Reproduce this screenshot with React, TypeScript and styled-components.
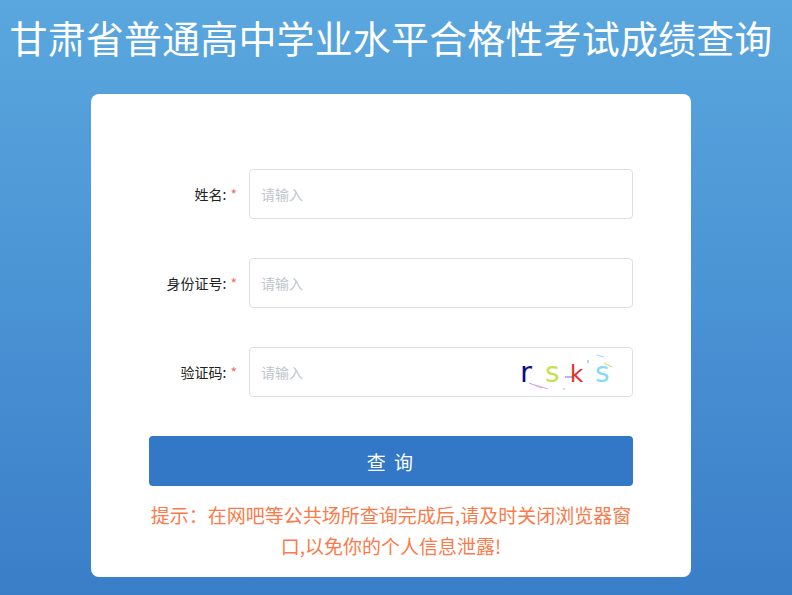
import React from "react";
import styled, { createGlobalStyle } from "styled-components";

const Global = createGlobalStyle`
  html, body { margin: 0; padding: 0; height: 100%; }
  body {
    font-family: "Noto Sans CJK SC", "Noto Sans", sans-serif;
    background: linear-gradient(180deg, #5aa7de 0%, #4a93d4 50%, #3a7ec8 100%);
    min-height: 595px;
    overflow: hidden;
  }
  #root { min-height: 595px; }
`;

const Page = styled.div`
  padding: 14px 10px 0 0;
  display: flex;
  flex-direction: column;
  align-items: center;
`;

const Title = styled.h1`
  margin: 0;
  font-size: 38px;
  line-height: 46px;
  font-weight: 400;
  color: #ffffff;
  white-space: nowrap;
  letter-spacing: 0.15px;
`;

const Card = styled.div`
  margin-top: 34px;
  width: 600px;
  box-sizing: border-box;
  background: #ffffff;
  border-radius: 8px;
  padding: 75px 58px 16px;
  display: flex;
  flex-direction: column;
  gap: 39px;
`;

const Row = styled.div`
  display: flex;
  align-items: center;
  height: 50px;
`;

const Label = styled.label`
  width: 100px;
  box-sizing: border-box;
  padding-right: 12px;
  text-align: right;
  font-size: 14px;
  color: #222;
  white-space: nowrap;
`;

const Star = styled.span`
  color: #f56c6c;
  margin-left: 4px;
`;

const Field = styled.div`
  position: relative;
  flex: 1;
  height: 50px;
`;

const Input = styled.input`
  width: 100%;
  height: 100%;
  box-sizing: border-box;
  border: 1px solid #dcdfe6;
  border-radius: 4px;
  padding: 0 11px;
  font-family: "Noto Sans CJK SC", "Noto Sans", sans-serif;
  font-size: 14px;
  color: #606266;
  outline: none;
  &::placeholder { color: #c0c4cc; }
`;

const Captcha = styled.svg`
  position: absolute;
  right: 8px;
  top: 2px;
`;

const Bottom = styled.div`
  display: flex;
  flex-direction: column;
`;

const Button = styled.button`
  height: 50px;
  width: 100%;
  border: none;
  border-radius: 4px;
  background: #3378c6;
  color: #ffffff;
  font-family: "Noto Sans CJK SC", "Noto Sans", sans-serif;
  font-size: 19px;
  letter-spacing: 2px;
  cursor: pointer;
`;

const Tip = styled.p`
  margin: 13px -4px 0;
  text-align: center;
  font-size: 19px;
  line-height: 31px;
  color: #fb7a4a;
  white-space: nowrap;
`;

const rows = [
  { label: "姓名:", captcha: false },
  { label: "身份证号:", captcha: false },
  { label: "验证码:", captcha: true },
];

function CaptchaImage() {
  const font = "DejaVu Sans, sans-serif";
  return (
    <Captcha width="110" height="46" viewBox="0 0 110 46">
      <line x1="14" y1="34" x2="27" y2="39" stroke="#b8a0f0" strokeWidth="1" />
      <line x1="20" y1="36" x2="33" y2="40" stroke="#f0a0d0" strokeWidth="1" />
      <line x1="50" y1="28" x2="58" y2="28" stroke="#b090f0" strokeWidth="1.5" />
      <line x1="82" y1="6" x2="89" y2="8" stroke="#a0d8f0" strokeWidth="1" />
      <line x1="89" y1="14" x2="97" y2="18" stroke="#c8d860" strokeWidth="1" />
      <line x1="73" y1="11" x2="73" y2="14" stroke="#60b0e0" strokeWidth="1" />
      <circle cx="49" cy="40" r="0.8" fill="#f080c0" />
      <text x="5" y="33" fontFamily={font} fontSize="29" fill="#0a0a8c">r</text>
      <text x="30" y="33" fontFamily={font} fontSize="28" fill="#c8e050">s</text>
      <text x="55" y="33" fontFamily={font} fontSize="23" fill="#e03028">k</text>
      <text x="80" y="33" fontFamily={font} fontSize="28" fill="#88daf8">s</text>
    </Captcha>
  );
}

export default function App() {
  return (
    <>
      <Global />
      <Page>
        <Title>甘肃省普通高中学业水平合格性考试成绩查询</Title>
        <Card>
          {rows.map((r) => (
            <Row key={r.label}>
              <Label>
                {r.label}
                <Star>*</Star>
              </Label>
              <Field>
                <Input placeholder="请输入" />
                {r.captcha && <CaptchaImage />}
              </Field>
            </Row>
          ))}
          <Bottom>
            <Button>查 询</Button>
            <Tip>
              提示：在网吧等公共场所查询完成后,请及时关闭浏览器窗
              <br />
              口,以免你的个人信息泄露!
            </Tip>
          </Bottom>
        </Card>
      </Page>
    </>
  );
}
